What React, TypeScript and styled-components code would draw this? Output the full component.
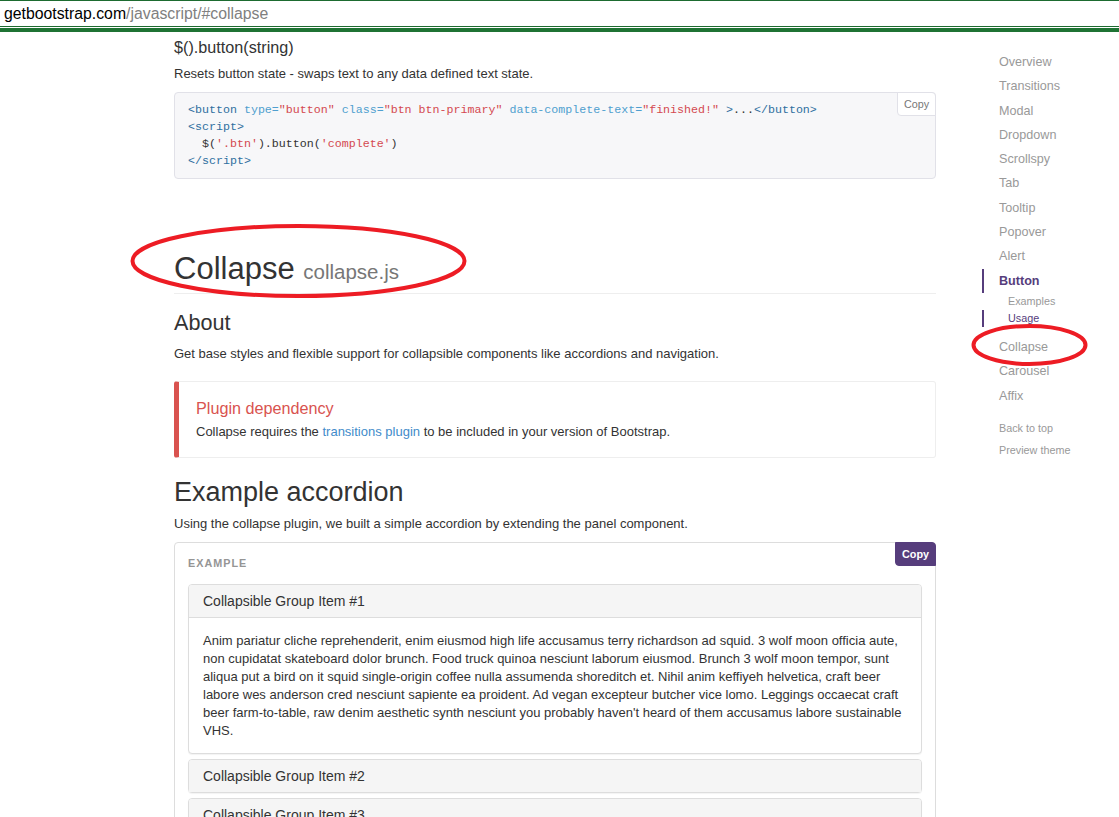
import React from "react";
import styled, { createGlobalStyle } from "styled-components";

const GlobalStyle = createGlobalStyle`
  html, body {
    margin: 0;
    padding: 0;
    background: #fff;
    overflow: hidden;
  }
  body {
    font-family: "Liberation Sans", Arial, sans-serif;
    color: #333;
  }
`;

const Screen = styled.div`
  position: relative;
  width: 1119px;
  height: 817px;
  overflow: hidden;
`;

const AddressBar = styled.div`
  height: 25px;
  border-top: 1px solid #1d6b30;
  border-bottom: 1px solid #1d6b30;
  padding-left: 4px;
  display: flex;
  align-items: center;
  font-size: 15.8px;
  color: #000;
`;

const UrlPath = styled.span`
  color: #808080;
`;

const BarStripe = styled.div`
  height: 4px;
  margin-top: 1px;
  background: #1f7334;
`;

const Page = styled.div`
  display: flex;
  padding-left: 174px;
`;

const Main = styled.div`
  width: 762px;
  flex-shrink: 0;
`;

const MethodTitle = styled.h4`
  margin: 6px 0 0;
  font-size: 16.2px;
  font-weight: normal;
  line-height: 18px;
`;

const Text = styled.p<{ $top?: number }>`
  margin: ${({ $top }) => $top ?? 9}px 0 0;
  font-size: 13px;
  line-height: 18px;
`;

const CodeBlock = styled.div`
  position: relative;
  margin-top: 9px;
  background: #f7f7f9;
  border: 1px solid #e1e1e8;
  border-radius: 4px;
  padding: 8px 13px 9px;
  font-family: "Liberation Mono", "Courier New", monospace;
  font-size: 11.65px;
  line-height: 17px;
  color: #333;
  white-space: pre;
`;

const Tag = styled.span`
  color: #2f6f9f;
`;
const Attr = styled.span`
  color: #4f9fcf;
`;
const Str = styled.span`
  color: #d44950;
`;

const CopyButton = styled.div<{ $primary?: boolean }>`
  position: absolute;
  top: -1px;
  right: -1px;
  width: ${({ $primary }) => ($primary ? 41 : 39)}px;
  height: 24px;
  box-sizing: border-box;
  display: flex;
  align-items: center;
  justify-content: center;
  font-family: "Liberation Sans", Arial, sans-serif;
  font-size: 10.8px;
  font-weight: ${({ $primary }) => ($primary ? "bold" : "normal")};
  color: ${({ $primary }) => ($primary ? "#fff" : "#777")};
  background: ${({ $primary }) => ($primary ? "#563d7c" : "#fff")};
  border: 1px solid ${({ $primary }) => ($primary ? "#563d7c" : "#e1e1e8")};
  border-radius: 0 4px 0 4px;
`;

const PageHeader = styled.div`
  margin-top: 72px;
  padding-bottom: 7px;
  border-bottom: 1px solid #eee;
`;

const SectionTitle = styled.h1`
  margin: 0;
  font-size: 31px;
  font-weight: normal;
  line-height: 35px;
  color: #333;
`;

const SectionSub = styled.small`
  font-size: 20.5px;
  line-height: 1;
  color: #777;
`;

const SubTitle = styled.h3<{ $size: number; $top: number }>`
  margin: ${({ $top }) => $top}px 0 0;
  font-size: ${({ $size }) => $size}px;
  line-height: ${({ $size }) => Math.round($size * 1.1)}px;
  font-weight: normal;
  color: #333;
`;

const Callout = styled.div`
  margin-top: 18px;
  padding: 17px 17px 16px;
  border: 1px solid #eee;
  border-left: 5px solid #d9534f;
  border-radius: 3px;
`;

const CalloutTitle = styled.h4`
  margin: 0;
  font-size: 16.2px;
  line-height: 18px;
  font-weight: normal;
  color: #d9534f;
`;

const Link = styled.a`
  color: #428bca;
  text-decoration: none;
`;

const Example = styled.div`
  position: relative;
  margin-top: 9px;
  padding: 41px 13px 13px;
  border: 1px solid #ddd;
  border-radius: 4px 4px 0 0;
`;

const ExampleLabel = styled.div`
  position: absolute;
  top: 14px;
  left: 13px;
  font-size: 10.8px;
  font-weight: bold;
  letter-spacing: 1px;
  text-transform: uppercase;
  color: #959595;
`;

const PanelGroup = styled.div`
  display: flex;
  flex-direction: column;
  gap: 5px;
`;

const Panel = styled.div`
  border: 1px solid #ddd;
  border-radius: 4px;
  background: #fff;
  box-shadow: 0 1px 1px rgba(0, 0, 0, 0.05);
`;

const PanelHeading = styled.div`
  padding: 8px 14px;
  background: #f5f5f5;
  border-radius: 3px 3px 0 0;
  font-size: 14px;
  line-height: 16px;
  color: #333;
`;

const PanelBody = styled.div`
  border-top: 1px solid #ddd;
  padding: 14px 14px 13px;
  font-size: 13px;
  line-height: 18px;
  color: #333;
`;

const Sidebar = styled.nav`
  margin-left: 46px;
  padding-top: 18px;
  width: 137px;
  font-size: 12.6px;
`;

const NavItem = styled.div<{ $active?: boolean }>`
  height: 24.3px;
  line-height: 24.3px;
  padding-left: ${({ $active }) => ($active ? 15 : 17)}px;
  border-left: ${({ $active }) => ($active ? "2px solid #563d7c" : "none")};
  color: ${({ $active }) => ($active ? "#563d7c" : "#999")};
  font-weight: ${({ $active }) => ($active ? "bold" : "normal")};
`;

const SubNav = styled.div`
  margin-bottom: 8px;
`;

const SubNavItem = styled.div<{ $active?: boolean }>`
  height: 17px;
  line-height: 17px;
  font-size: 10.8px;
  padding-left: ${({ $active }) => ($active ? 24 : 26)}px;
  border-left: ${({ $active }) => ($active ? "2px solid #563d7c" : "none")};
  color: ${({ $active }) => ($active ? "#563d7c" : "#999")};
`;

const NavFooter = styled.div`
  margin-top: 9px;
`;

const FooterLink = styled.div`
  height: 22px;
  line-height: 22px;
  padding-left: 17px;
  font-size: 10.8px;
  color: #999;
`;

const Annotation = styled.svg`
  position: absolute;
  left: 0;
  top: 0;
  pointer-events: none;
`;

const navItems = [
  "Overview",
  "Transitions",
  "Modal",
  "Dropdown",
  "Scrollspy",
  "Tab",
  "Tooltip",
  "Popover",
  "Alert",
];

const loremBody =
  "Anim pariatur cliche reprehenderit, enim eiusmod high life accusamus terry richardson ad squid. 3 wolf moon officia aute, non cupidatat skateboard dolor brunch. Food truck quinoa nesciunt laborum eiusmod. Brunch 3 wolf moon tempor, sunt aliqua put a bird on it squid single-origin coffee nulla assumenda shoreditch et. Nihil anim keffiyeh helvetica, craft beer labore wes anderson cred nesciunt sapiente ea proident. Ad vegan excepteur butcher vice lomo. Leggings occaecat craft beer farm-to-table, raw denim aesthetic synth nesciunt you probably haven't heard of them accusamus labore sustainable VHS.";

export default function App() {
  return (
    <Screen>
      <GlobalStyle />
      <AddressBar>
        getbootstrap.com<UrlPath>/javascript/#collapse</UrlPath>
      </AddressBar>
      <BarStripe />
      <Page>
        <Main>
          <MethodTitle>$().button(string)</MethodTitle>
          <Text>Resets button state - swaps text to any data defined text state.</Text>
          <CodeBlock>
            <Tag>&lt;button</Tag> <Attr>type=</Attr>
            <Str>"button"</Str> <Attr>class=</Attr>
            <Str>"btn btn-primary"</Str> <Attr>data-complete-text=</Attr>
            <Str>"finished!"</Str> <Tag>&gt;</Tag>...<Tag>&lt;/button&gt;</Tag>
            {"\n"}
            <Tag>&lt;script&gt;</Tag>
            {"\n  $("}
            <Str>'.btn'</Str>).button(<Str>'complete'</Str>)
            {"\n"}
            <Tag>&lt;/script&gt;</Tag>
            <CopyButton>Copy</CopyButton>
          </CodeBlock>

          <PageHeader>
            <SectionTitle>
              Collapse <SectionSub>collapse.js</SectionSub>
            </SectionTitle>
          </PageHeader>
          <SubTitle $size={21.6} $top={17}>About</SubTitle>
          <Text $top={10}>
            Get base styles and flexible support for collapsible components like accordions and navigation.
          </Text>

          <Callout>
            <CalloutTitle>Plugin dependency</CalloutTitle>
            <Text $top={6}>
              Collapse requires the <Link>transitions plugin</Link> to be included in your version of Bootstrap.
            </Text>
          </Callout>

          <SubTitle $size={27} $top={19}>Example accordion</SubTitle>
          <Text $top={8}>
            Using the collapse plugin, we built a simple accordion by extending the panel component.
          </Text>

          <Example>
            <ExampleLabel>Example</ExampleLabel>
            <CopyButton $primary>Copy</CopyButton>
            <PanelGroup>
              <Panel>
                <PanelHeading>Collapsible Group Item #1</PanelHeading>
                <PanelBody>{loremBody}</PanelBody>
              </Panel>
              <Panel>
                <PanelHeading>Collapsible Group Item #2</PanelHeading>
              </Panel>
              <Panel>
                <PanelHeading>Collapsible Group Item #3</PanelHeading>
              </Panel>
            </PanelGroup>
          </Example>
        </Main>

        <Sidebar>
          {navItems.map((item) => (
            <NavItem key={item}>{item}</NavItem>
          ))}
          <NavItem $active>Button</NavItem>
          <SubNav>
            <SubNavItem>Examples</SubNavItem>
            <SubNavItem $active>Usage</SubNavItem>
          </SubNav>
          <NavItem>Collapse</NavItem>
          <NavItem>Carousel</NavItem>
          <NavItem>Affix</NavItem>
          <NavFooter>
            <FooterLink>Back to top</FooterLink>
            <FooterLink>Preview theme</FooterLink>
          </NavFooter>
        </Sidebar>
      </Page>

      <Annotation width="1119" height="817">
        <ellipse cx="298.5" cy="261" rx="166" ry="35" fill="none" stroke="#ed1c24" strokeWidth="4" />
        <ellipse cx="1029.5" cy="345" rx="56" ry="19" fill="none" stroke="#ed1c24" strokeWidth="4" />
      </Annotation>
    </Screen>
  );
}
